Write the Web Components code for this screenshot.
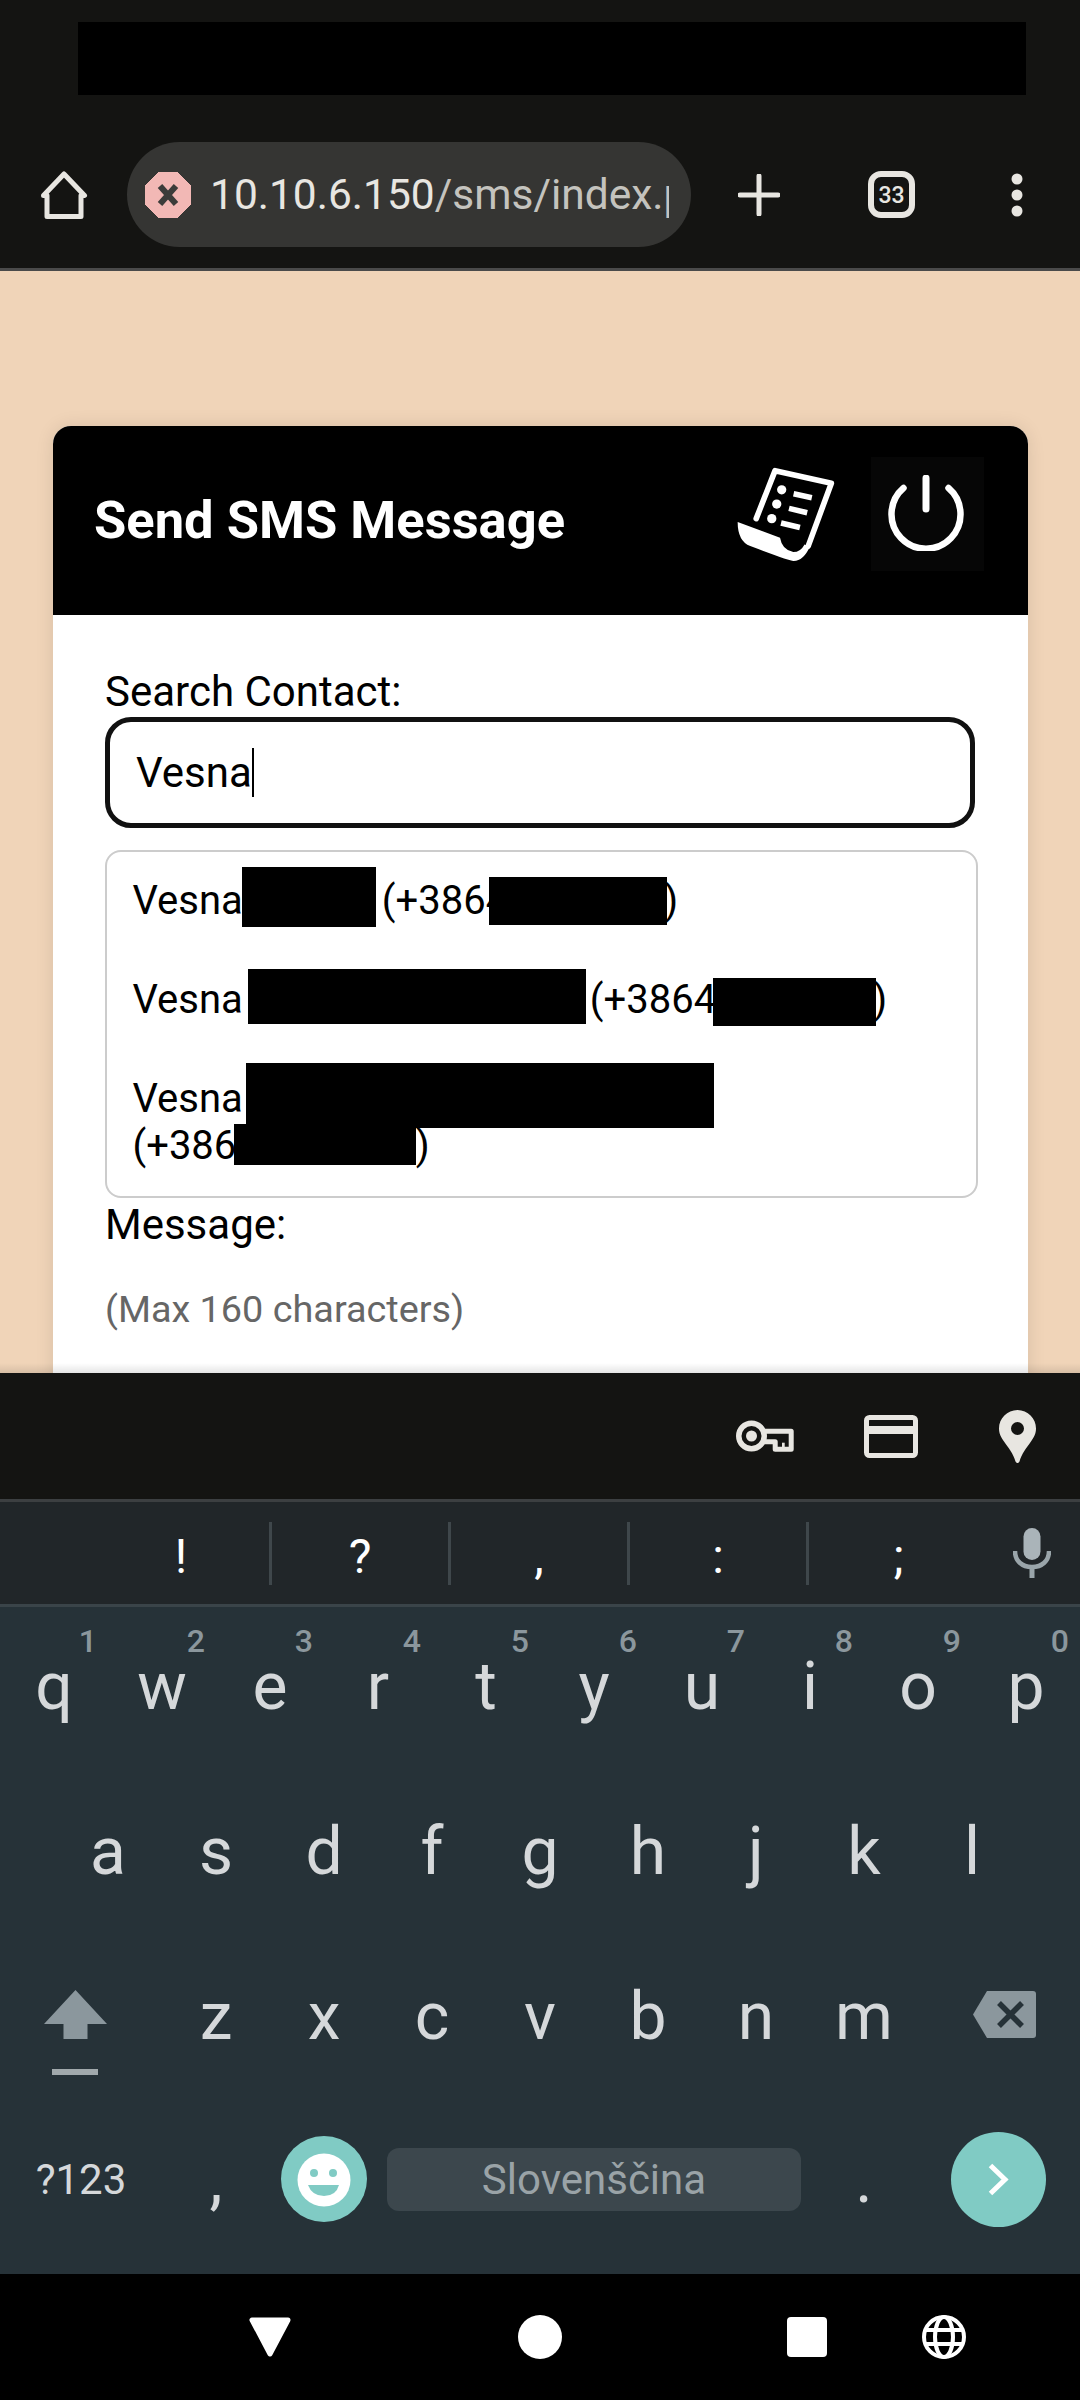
<!DOCTYPE html>
<html>
<head>
<meta charset="utf-8">
<title>Send SMS Message</title>
<style>
    html, body { margin: 0; padding: 0; }
    body { width: 1080px; height: 2400px; overflow: hidden; background: #263238; font-family: Roboto, "Liberation Sans", sans-serif; }
    #screen { display: flex; flex-direction: column; width: 1080px; height: 2400px; }
</style>
</head>
<body>
<div id="screen">
    <browser-bar url="10.10.6.150" path="/sms/index.php" tabs="33"></browser-bar>

    <web-page>
        <sms-card heading="Send SMS Message">
            <form-label>Search Contact:</form-label>
            <search-field value="Vesna"></search-field>
            <contact-list>
                <contact-item>Vesna<redact-bar adv="139" dx="-1" top="-47" w="134" h="60"></redact-bar>(+3864<redact-bar adv="156" dx="-19" top="-37" w="178" h="48"></redact-bar>)</contact-item>
                <contact-item>Vesna<redact-bar adv="347" dx="5" top="-44" w="338" h="55"></redact-bar>(+3864<redact-bar adv="157" dx="-3" top="-35" w="163" h="48"></redact-bar>)</contact-item>
                <contact-item>Vesna<redact-bar adv="0" dx="3" top="-49" w="468" h="65"></redact-bar><br>(+3864<redact-bar adv="157" dx="-25" top="-35" w="182" h="41"></redact-bar>)</contact-item>
            </contact-list>
            <form-label>Message:</form-label>
            <form-hint>(Max 160 characters)</form-hint>
        </sms-card>
    </web-page>

    <accessory-bar></accessory-bar>
    <suggestion-strip>
        <suggestion-cell>!</suggestion-cell>
        <suggestion-cell>?</suggestion-cell>
        <suggestion-cell>,</suggestion-cell>
        <suggestion-cell>:</suggestion-cell>
        <suggestion-cell>;</suggestion-cell>
    </suggestion-strip>

    <soft-keyboard>
        <kb-row>
            <kb-key hint="1">q</kb-key><kb-key hint="2">w</kb-key><kb-key hint="3">e</kb-key><kb-key hint="4">r</kb-key><kb-key hint="5">t</kb-key><kb-key hint="6">y</kb-key><kb-key hint="7">u</kb-key><kb-key hint="8">i</kb-key><kb-key hint="9">o</kb-key><kb-key hint="0">p</kb-key>
        </kb-row>
        <kb-row inset>
            <kb-key>a</kb-key><kb-key>s</kb-key><kb-key>d</kb-key><kb-key>f</kb-key><kb-key>g</kb-key><kb-key>h</kb-key><kb-key>j</kb-key><kb-key>k</kb-key><kb-key>l</kb-key>
        </kb-row>
        <kb-row>
            <kb-key style="--w:162px;--pt:53px">
                <svg style="display:block;margin-left:44px" width="63" height="85" viewBox="0 0 63 85">
                    <path d="M31.5 0L63 34H43.5V49H19.5V34H0Z" fill="#8b979d"/>
                    <rect x="8" y="79" width="46" height="6" fill="#a1a9ac"/>
                </svg>
            </kb-key>
            <kb-key>z</kb-key><kb-key>x</kb-key><kb-key>c</kb-key><kb-key>v</kb-key><kb-key>b</kb-key><kb-key>n</kb-key><kb-key>m</kb-key>
            <kb-key style="--w:162px;--pt:54px">
                <svg style="display:block;margin-left:55px" width="63" height="47" viewBox="0 0 63 47">
                    <path d="M14 0H60Q63 0 63 3V44Q63 47 60 47H14L0 23.5Z" fill="#8b979d"/>
                    <path d="M26 12L49 35M49 12L26 35" stroke="#263238" stroke-width="5.5" fill="none"/>
                </svg>
            </kb-key>
        </kb-row>
        <kb-row tall>
            <kb-key style="--w:162px;--pt:53px;--fs:42px">?123</kb-key>
            <kb-key style="--pt:39px">,</kb-key>
            <kb-key style="--pt:34px">
                <svg style="display:block;margin-left:11px" width="86" height="86" viewBox="0 0 86 86">
                    <circle cx="43" cy="43" r="43" fill="#80cbc4"/>
                    <circle cx="43" cy="44" r="26.5" fill="#fff"/>
                    <circle cx="33" cy="37" r="4" fill="#80cbc4"/>
                    <circle cx="52" cy="37" r="4" fill="#80cbc4"/>
                    <path d="M27 49H58Q55 60 43 60T27 49Z" fill="#80cbc4"/>
                </svg>
            </kb-key>
            <space-bar>Slovenščina</space-bar>
            <kb-key style="--pt:39px">.</kb-key>
            <kb-key style="--w:162px;--pt:30px">
                <svg style="display:block;margin-left:33px" width="95" height="95" viewBox="0 0 95 95">
                    <circle cx="47.5" cy="47.5" r="47.5" fill="#80cbc4"/>
                    <path d="M39.5 33.5L54 47.5L39.5 61.5" stroke="#fff" stroke-width="5" fill="none"/>
                </svg>
            </kb-key>
        </kb-row>
    </soft-keyboard>

    <nav-bar></nav-bar>
</div>

<script>
// small helper, every element here is just a shadow root with fixed markup
function shadow(el, html) {
    el.attachShadow({ mode: 'open' });
    el.shadowRoot.innerHTML = html;
}

class BrowserBar extends HTMLElement {
    connectedCallback() {
        shadow(this, `
            <style>
                :host { display: block; flex: none; box-sizing: border-box; height: 271px; padding-top: 22px; background: #141412; border-bottom: 3px solid #4a4a4a; color: #e8e6e1; font-family: Roboto, sans-serif; }
                .blackout { height: 73px; margin: 0 54px 0 78px; background: #000; }
                .toolbar { display: flex; align-items: center; height: 105px; margin-top: 47px; padding-left: 40px; }
                svg { display: block; flex: none; }
                .pill { display: flex; align-items: center; box-sizing: border-box; flex: none; width: 564px; height: 105px; margin-left: 39px; padding-left: 18px; border-radius: 53px; background: #353533; }
                .url { width: 459px; margin-left: 19px; overflow: hidden; white-space: nowrap; font-size: 42.5px; color: #e8e6e1; }
                .url span { color: #c4c3be; }
            </style>
            <div class="blackout"></div>
            <div class="toolbar">
                <svg width="48" height="48" viewBox="0 0 48 48">
                    <path d="M24 3L44.5 24.5H41V45.5H7V24.5H3.5Z" fill="none" stroke="#e8e6e1" stroke-width="5" stroke-linejoin="round"/>
                </svg>
                <div class="pill">
                    <svg width="46" height="46" viewBox="0 0 46 46">
                        <path d="M14 0H32L46 14V32L32 46H14L0 32V14Z" fill="#f2b8b5" stroke="#f2b8b5" stroke-linejoin="round" stroke-width="1"/>
                        <path d="M15 14L31 32M31 14L15 32" stroke="#3c3c3a" stroke-width="6" fill="none"/>
                    </svg>
                    <div class="url">${this.getAttribute('url')}<span>${this.getAttribute('path')}</span></div>
                </div>
                <svg style="margin-left:47px" width="42" height="42" viewBox="0 0 42 42">
                    <path d="M21 2V40M2 21H40" stroke="#e8e6e1" stroke-width="5" stroke-linecap="round" fill="none"/>
                </svg>
                <svg style="margin-left:88px" width="47" height="47" viewBox="0 0 47 47">
                    <rect x="3" y="3" width="41" height="41" rx="10" fill="none" stroke="#e8e6e1" stroke-width="6"/>
                    <text x="23.5" y="31.5" text-anchor="middle" font-family="Roboto" font-weight="500" font-size="23" fill="#e8e6e1">${this.getAttribute('tabs')}</text>
                </svg>
                <svg style="margin-left:96px" width="12" height="44" viewBox="0 0 12 44">
                    <circle cx="6" cy="6" r="5.5" fill="#e8e6e1"/>
                    <circle cx="6" cy="22" r="5.5" fill="#e8e6e1"/>
                    <circle cx="6" cy="38" r="5.5" fill="#e8e6e1"/>
                </svg>
            </div>
        `);
    }
}

class WebPage extends HTMLElement {
    connectedCallback() {
        shadow(this, `
            <style>
                :host { display: block; position: relative; flex: none; box-sizing: border-box; height: 1102px; padding: 155px 52px 0 53px; overflow: hidden; background: #f0d4b8; }
                .fade { position: absolute; left: 0; right: 0; bottom: 0; height: 10px; background: linear-gradient(rgba(0,0,0,0), rgba(0,0,0,.1)); }
            </style>
            <slot></slot>
            <div class="fade"></div>
        `);
    }
}

class SmsCard extends HTMLElement {
    connectedCallback() {
        shadow(this, `
            <style>
                :host { display: block; min-height: 1100px; border-radius: 18px 18px 0 0; background: #fff; box-shadow: 0 0 18px rgba(0,0,0,.1); overflow: hidden; color: #000; font-family: Roboto, sans-serif; }
                header { display: flex; align-items: center; box-sizing: border-box; height: 189px; padding: 0 44px 0 41px; background: #000; }
                h1 { flex: 1; margin: -2px 0 0; font-size: 52.5px; font-weight: 700; color: #fff; }
                .log { display: block; margin: -12px 36px 0 0; }
                .power { display: flex; align-items: center; justify-content: center; width: 113px; height: 114px; margin-top: -14px; background: #060606; }
                .power svg { margin: -2px 3px 0 0; }
                .body { padding: 53px 52px 0 52px; }
            </style>
            <header>
                <h1>${this.getAttribute('heading')}</h1>
                <svg class="log" width="98" height="95" viewBox="110 112 296 285">
                    <path d="M168 267L225 122L395 160L325 350" fill="none" stroke="#fff" stroke-width="17" stroke-linecap="round" stroke-linejoin="round"/>
                    <path d="M112 277L240 325Q246 362 280 368Q302 368 314 345L330 352Q310 396 280 395Q270 395 150 350Q112 335 112 277Z" fill="#fff"/>
                    <circle cx="245" cy="180" r="14" fill="#fff"/>
                    <circle cx="230" cy="223" r="14" fill="#fff"/>
                    <circle cx="215" cy="267" r="14" fill="#fff"/>
                    <path d="M281 192L336 204M267 236L322 249M243 280L300 294" stroke="#fff" stroke-width="17" fill="none"/>
                </svg>
                <div class="power">
                    <svg width="76" height="76" viewBox="0 0 76 76">
                        <path d="M15.5 13A34.5 34.5 0 1 0 60.5 13" fill="none" stroke="#fff" stroke-width="6.5" stroke-linecap="round"/>
                        <path d="M38 3V34" fill="none" stroke="#fff" stroke-width="7" stroke-linecap="round"/>
                    </svg>
                </div>
            </header>
            <div class="body"><slot></slot></div>
        `);
    }
}

class FormLabel extends HTMLElement {
    connectedCallback() {
        shadow(this, `<style>:host { display: block; font-size: 42px; line-height: 47px; color: #000; }</style><slot></slot>`);
    }
}

class FormHint extends HTMLElement {
    connectedCallback() {
        shadow(this, `<style>:host { display: block; margin-top: 40px; font-size: 37.8px; line-height: 42px; color: #666; }</style><slot></slot>`);
    }
}

class SearchField extends HTMLElement {
    connectedCallback() {
        shadow(this, `
            <style>
                :host { display: flex; align-items: center; box-sizing: border-box; width: 870px; height: 111px; margin-top: 2px; padding-left: 26px; border: 5px solid #111; border-radius: 26px; background: #fff; font-size: 42px; color: #000; }
                i { display: inline-block; width: 2px; height: 49px; margin-left: 0; background: #000; }
            </style>
            <span>${this.getAttribute('value')}</span><i></i>
        `);
    }
}

class ContactList extends HTMLElement {
    connectedCallback() {
        shadow(this, `<style>:host { display: block; box-sizing: border-box; width: 873px; height: 348px; margin: 22px 0 3px; border: 2px solid #ccc; border-radius: 16px; background: #fff; }</style><slot></slot>`);
    }
}

class ContactItem extends HTMLElement {
    connectedCallback() {
        shadow(this, `<style>:host { display: block; padding: 25px 26px 27px 25.5px; font-size: 40px; line-height: 47px; color: #000; }</style><slot></slot>`);
    }
}

// black bar over private text, sits on the text baseline
class RedactBar extends HTMLElement {
    connectedCallback() {
        const a = n => this.getAttribute(n);
        shadow(this, `
            <style>
                :host { display: inline-block; position: relative; width: ${a('adv')}px; height: 0; }
                div { position: absolute; left: ${a('dx')}px; top: ${a('top')}px; width: ${a('w')}px; height: ${a('h')}px; background: #000; }
            </style>
            <div></div>
        `);
    }
}

class AccessoryBar extends HTMLElement {
    connectedCallback() {
        shadow(this, `
            <style>
                :host { display: flex; align-items: center; justify-content: flex-end; flex: none; box-sizing: border-box; height: 129px; padding-right: 44px; background: #141412; border-bottom: 3px solid #3c3f41; }
                svg { display: block; flex: none; }
            </style>
            <svg width="58" height="32" viewBox="0 0 58 32">
                <circle cx="15.5" cy="16" r="12.75" fill="none" stroke="#e8e6e1" stroke-width="5.5"/>
                <circle cx="15.5" cy="16" r="5.5" fill="#e8e6e1"/>
                <path d="M26 11.2H55.2V29.2H39.2V21.8H27" fill="none" stroke="#e8e6e1" stroke-width="5" stroke-linejoin="round"/>
                <rect x="46" y="22.7" width="2.7" height="5" fill="#e8e6e1"/>
            </svg>
            <svg style="margin-left:70px" width="54" height="43" viewBox="0 0 54 43">
                <rect x="2.5" y="2.5" width="49" height="38" rx="3" fill="none" stroke="#e8e6e1" stroke-width="5"/>
                <rect x="2" y="11" width="50" height="8" fill="#e8e6e1"/>
            </svg>
            <svg style="margin-left:81px" width="37" height="53" viewBox="0 0 37 53">
                <path fill-rule="evenodd" d="M18.5 0C8.3 0 0 8.3 0 18.5C0 24 2.2 27.5 5 31.5C9 37 14.5 44 16.5 51.5Q18.5 54.5 20.5 51.5C22.5 44 28 37 32 31.5C34.8 27.5 37 24 37 18.5C37 8.3 28.7 0 18.5 0ZM18.5 12A6.5 6.5 0 1 1 18.5 25A6.5 6.5 0 1 1 18.5 12Z" fill="#e8e6e1"/>
            </svg>
        `);
    }
}

class SuggestionStrip extends HTMLElement {
    connectedCallback() {
        shadow(this, `
            <style>
                :host { display: grid; grid-template-columns: repeat(5, 179px) 92px; flex: none; box-sizing: border-box; height: 105px; padding-left: 93px; background: #212629; border-bottom: 3px solid #3a4449; }
                svg { display: block; margin: 26px 0 0 25px; }
            </style>
            <slot></slot>
            <svg width="38" height="50" viewBox="0 0 38 50">
                <rect x="10.5" y="0" width="17" height="32" rx="8.5" fill="#aab4b9"/>
                <path d="M2 23C2 33 9 39 19 39S36 33 36 23" fill="none" stroke="#9aa5aa" stroke-width="4.5"/>
                <rect x="16.5" y="38" width="5" height="12" fill="#9aa5aa"/>
            </svg>
        `);
    }
}

class SuggestionCell extends HTMLElement {
    connectedCallback() {
        shadow(this, `
            <style>
                :host { display: block; box-sizing: border-box; height: 63px; margin-top: 20px; padding-top: 7px; text-align: center; font-size: 48px; line-height: 56px; color: #fff; border-right: 3px solid #3f474b; }
                :host(:last-child) { border-right: 0; }
            </style>
            <slot></slot>
        `);
    }
}

class SoftKeyboard extends HTMLElement {
    connectedCallback() {
        shadow(this, `<style>:host { display: block; flex: none; background: #263238; }</style><slot></slot>`);
    }
}

class KbRow extends HTMLElement {
    connectedCallback() {
        shadow(this, `
            <style>
                :host { display: flex; height: 165px; }
                :host([inset]) { padding-left: 54px; }
                :host([tall]) { height: 172px; }
            </style>
            <slot></slot>
        `);
    }
}

class KbKey extends HTMLElement {
    connectedCallback() {
        const hint = this.getAttribute('hint');
        shadow(this, `
            <style>
                :host { display: block; position: relative; flex: none; box-sizing: border-box; width: var(--w, 108px); padding-top: var(--pt, 41px); text-align: center; font-size: var(--fs, 66px); color: #d5d8da; }
                b { position: absolute; top: 15px; right: 11px; font-size: 32px; font-weight: 500; color: #8b979d; }
            </style>
            ${hint ? `<b>${hint}</b>` : ''}<slot></slot>
        `);
    }
}

class SpaceBar extends HTMLElement {
    connectedCallback() {
        shadow(this, `
            <style>
                :host { display: flex; align-items: center; justify-content: center; flex: none; box-sizing: border-box; width: 414px; height: 63px; margin: 46px 9px 0; border-radius: 12px; background: #3c474d; font-size: 42px; color: #9aa3a7; }
            </style>
            <slot></slot>
        `);
    }
}

class NavBar extends HTMLElement {
    connectedCallback() {
        shadow(this, `
            <style>
                :host { display: flex; align-items: center; flex: 1; padding-left: 248px; background: #000; }
                svg { display: block; flex: none; }
            </style>
            <svg width="44" height="40" viewBox="0 0 44 40">
                <path d="M4 3H40L22 37Z" fill="#fff" stroke="#fff" stroke-width="5" stroke-linejoin="round"/>
            </svg>
            <svg style="margin-left:226px" width="44" height="44" viewBox="0 0 44 44"><circle cx="22" cy="22" r="22" fill="#fff"/></svg>
            <svg style="margin-left:225px" width="40" height="40" viewBox="0 0 40 40"><rect width="40" height="40" rx="4" fill="#fff"/></svg>
            <svg style="margin-left:95px" width="44" height="44" viewBox="0 0 44 44" fill="none" stroke="#fff" stroke-width="4">
                <circle cx="22" cy="22" r="20"/>
                <ellipse cx="22" cy="22" rx="9" ry="20"/>
                <path d="M3.5 15H40.5M3.5 29H40.5"/>
            </svg>
        `);
    }
}

customElements.define('browser-bar', BrowserBar);
customElements.define('web-page', WebPage);
customElements.define('sms-card', SmsCard);
customElements.define('form-label', FormLabel);
customElements.define('form-hint', FormHint);
customElements.define('search-field', SearchField);
customElements.define('contact-list', ContactList);
customElements.define('contact-item', ContactItem);
customElements.define('redact-bar', RedactBar);
customElements.define('accessory-bar', AccessoryBar);
customElements.define('suggestion-strip', SuggestionStrip);
customElements.define('suggestion-cell', SuggestionCell);
customElements.define('soft-keyboard', SoftKeyboard);
customElements.define('kb-row', KbRow);
customElements.define('kb-key', KbKey);
customElements.define('space-bar', SpaceBar);
customElements.define('nav-bar', NavBar);
</script>
</body>
</html>
